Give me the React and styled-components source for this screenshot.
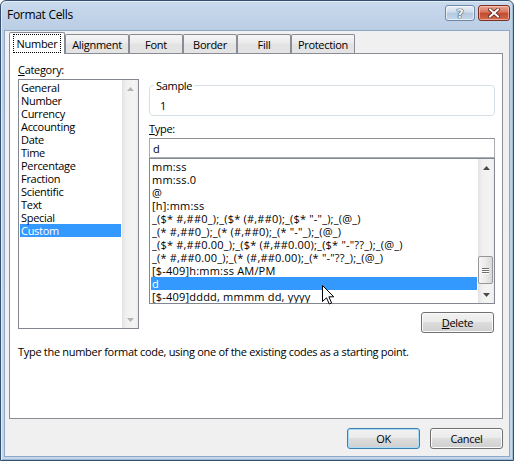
import React from 'react';
import styled, { createGlobalStyle } from 'styled-components';

const FONT = '"Open Sans", "Noto Sans", "Liberation Sans", sans-serif';

const GlobalStyle = createGlobalStyle`
  html, body { margin: 0; padding: 0; background: #fff; }
  body { font-family: ${FONT}; font-size: 11px; letter-spacing: -0.3px; color: #000; }
  * { box-sizing: border-box; }
`;

const categories = ['General', 'Number', 'Currency', 'Accounting', 'Date', 'Time',
  'Percentage', 'Fraction', 'Scientific', 'Text', 'Special', 'Custom'];

const formats = [
  'mm:ss',
  'mm:ss.0',
  '@',
  '[h]:mm:ss',
  '_($* #,##0_);_($* (#,##0);_($* "-"_);_(@_)',
  '_(* #,##0_);_(* (#,##0);_(* "-"_);_(@_)',
  '_($* #,##0.00_);_($* (#,##0.00);_($* "-"??_);_(@_)',
  '_(* #,##0.00_);_(* (#,##0.00);_(* "-"??_);_(@_)',
  '[$-409]h:mm:ss AM/PM',
  'd',
  '[$-409]dddd, mmmm dd, yyyy',
];

const tabs = [
  { label: 'Number', w: 56 },
  { label: 'Alignment', w: 64 },
  { label: 'Font', w: 54 },
  { label: 'Border', w: 54 },
  { label: 'Fill', w: 54 },
  { label: 'Protection', w: 64 },
];

const Window = styled.div`
  position: relative;
  width: 514px;
  height: 461px;
  display: flex;
  flex-direction: column;
  border: 1px solid #34506e;
  border-radius: 6px 6px 0 0;
  padding: 0 3px 3px;
  background: linear-gradient(#c9daed, #b9cde4 30px, #c3d6eb);
  box-shadow: inset 1px 1px 0 #e3edf7, inset -1px -1px 0 #9fbad6;
`;

const TitleBar = styled.div`
  height: 29px;
  display: flex;
  align-items: flex-start;
  justify-content: space-between;
  padding: 4px 0 0 3px;
`;

const Title = styled.div`
  font-size: 12px;
  line-height: 19px;
  color: #000;
`;

const CaptionButtons = styled.div`
  display: flex;
  gap: 3px;
`;

const CaptionButton = styled.div`
  width: ${p => (p.$close ? 32 : 30)}px;
  height: 16px;
  border-radius: 3px;
  display: flex;
  align-items: center;
  justify-content: center;
  border: 1px solid ${p => (p.$close ? '#7a2f22' : '#6d87a5')};
  background: ${p => (p.$close
    ? 'linear-gradient(#e9a593, #d9745c 45%, #c44a30 50%, #cf6a4c)'
    : 'linear-gradient(#e8eff7, #cfdcea 45%, #b5c8de 50%, #c5d6e8)')};
  box-shadow: inset 0 0 0 1px ${p => (p.$close ? 'rgba(255,210,200,0.6)' : 'rgba(255,255,255,0.6)')};
`;

const HelpGlyph = styled.span`
  font-family: "DejaVu Sans", sans-serif;
  font-weight: bold;
  font-size: 13px;
  line-height: 13px;
  letter-spacing: 0;
  color: #eef3f8;
  text-shadow: 0 0 1px #2c4661, 0 0 1px #2c4661, 0 0 1px #2c4661;
`;

const Client = styled.div`
  flex: 1;
  display: flex;
  flex-direction: column;
  background: #f0f0f0;
  border: 1px solid #8ea8c5;
  padding: 1px 6px 0 4px;
`;

const TabStrip = styled.div`
  position: relative;
  z-index: 1;
  height: 21px;
  display: flex;
  align-items: flex-end;
`;

const Tab = styled.div`
  width: ${p => p.$w}px;
  height: ${p => (p.$active ? 22 : 19)}px;
  margin-bottom: ${p => (p.$active ? -1 : 0)}px;
  border: 1px solid #898c95;
  border-bottom: none;
  border-radius: 2px 2px 0 0;
  background: ${p => (p.$active
    ? '#fff'
    : 'linear-gradient(#f5f5f5, #ebebeb 45%, #e2e2e2 50%, #e4e4e4)')};
  display: flex;
  align-items: center;
  justify-content: center;
  padding-bottom: ${p => (p.$active ? 1 : 0)}px;
  font-size: 11px;
  line-height: 15px;
`;

const FocusText = styled.span`
  outline: 1px dotted #000;
  outline-offset: 0;
  padding: 1px 3px;
`;

const Panel = styled.div`
  height: 366px;
  background: #fff;
  border: 1px solid #898c95;
  padding: 8px 7px 0 8px;
`;

const PanelGrid = styled.div`
  display: grid;
  grid-template-columns: 121px 346px;
  column-gap: 10px;
  align-items: start;
`;

const Column = styled.div`
  display: flex;
  flex-direction: column;
`;

const FieldLabel = styled.div`
  line-height: 15px;
  margin-top: ${p => p.$top || 0}px;
  margin-bottom: 2px;
`;

const ListBox = styled.div`
  position: relative;
  height: ${p => p.$h}px;
  border: 1px solid #828790;
  background: #fff;
  display: flex;
`;

const Items = styled.div`
  flex: 1;
  min-width: 0;
  overflow: hidden;
  padding: 1px;
`;

const Item = styled.div`
  height: 13px;
  line-height: 13px;
  padding-left: 1px;
  white-space: pre;
  letter-spacing: ${p => (p.$code ? '0.2px' : 'inherit')};
  background: ${p => (p.$selected ? '#3399ff' : 'transparent')};
  color: ${p => (p.$selected ? '#fff' : '#000')};
`;

const ScrollBar = styled.div`
  width: 16px;
  display: flex;
  flex-direction: column;
  background: linear-gradient(to right, #e2e2e2, #f0f0f0 25%, #f4f4f4 75%, #ededed);
`;

const ScrollArrow = styled.div`
  height: 17px;
  display: flex;
  align-items: center;
  justify-content: center;
  color: ${p => (p.$disabled ? '#b4b4b4' : '#4a4a4a')};
`;

const ScrollTrack = styled.div`
  flex: 1;
  display: flex;
  flex-direction: column;
  justify-content: flex-end;
  padding: 0 1px 2px 0;
`;

const ScrollThumb = styled.div`
  height: 28px;
  border: 1px solid #979797;
  border-radius: 2px;
  background: linear-gradient(to right, #f6f6f6, #eaeaea 50%, #d9d9d9);
  display: flex;
  flex-direction: column;
  align-items: center;
  justify-content: center;
  gap: 1px;
`;

const Grip = styled.div`
  width: 7px;
  height: 1px;
  background: #6e6e6e;
  box-shadow: 0 1px 0 #fff;
`;

const SampleGroup = styled.fieldset`
  margin: 16px 0 0;
  padding: 5px 8px 2px;
  border: 1px solid #d5dfe5;
  border-radius: 4px;
  min-width: 0;
`;

const SampleLegend = styled.legend`
  padding: 0 2px;
  margin-left: -4px;
  line-height: 15px;
`;

const SampleValue = styled.div`
  line-height: 15px;
  padding-left: 2px;
`;

const TypeInput = styled.input`
  height: 20px;
  width: 100%;
  border: 1px solid #abadb3;
  border-top-color: #8e9196;
  padding: 0 3px;
  font-family: ${FONT};
  font-size: 11px;
  color: #000;
  outline: none;
  background: #fff;
`;

const ButtonRow = styled.div`
  display: flex;
  justify-content: flex-end;
  padding-right: 1px;
  margin-top: 8px;
`;

const DialogButton = styled.button`
  width: 73px;
  height: 21px;
  padding: 0;
  font-family: ${FONT};
  font-size: 11px;
  letter-spacing: -0.3px;
  color: #000;
  border: 1px solid ${p => (p.$default ? '#3c7fb1' : '#707070')};
  border-radius: 3px;
  background: linear-gradient(#f2f2f2, #ebebeb 45%, #dddddd 50%, #cfcfcf);
  box-shadow: inset 0 0 0 1px ${p => (p.$default ? '#a9dcf6' : '#fbfbfb')};
`;

const Hint = styled.div`
  margin-top: 11px;
  line-height: 15px;
`;

const Footer = styled.div`
  display: flex;
  justify-content: flex-end;
  gap: 10px;
  padding-top: 9px;
`;

const Pointer = styled.svg`
  position: absolute;
  left: 172px;
  top: 126px;
  z-index: 2;
`;

function Arrow({ up }) {
  return (
    <svg width="7" height="4" viewBox="0 0 7 4">
      <path d={up ? 'M3.5 0 L7 4 L0 4 Z' : 'M0 0 L7 0 L3.5 4 Z'} fill="currentColor" />
    </svg>
  );
}

function CloseGlyph() {
  return (
    <svg width="12" height="10" viewBox="0 0 12 10">
      <path d="M2 1.5 L10 8.5 M10 1.5 L2 8.5" stroke="#5a2218" strokeWidth="3.6" strokeLinecap="square" />
      <path d="M2 1.5 L10 8.5 M10 1.5 L2 8.5" stroke="#fff" strokeWidth="2" strokeLinecap="square" />
    </svg>
  );
}

function Scroller({ disabled, thumb }) {
  return (
    <ScrollBar>
      <ScrollArrow $disabled={disabled}><Arrow up /></ScrollArrow>
      <ScrollTrack>
        {thumb && (
          <ScrollThumb>
            <Grip /><Grip /><Grip />
          </ScrollThumb>
        )}
      </ScrollTrack>
      <ScrollArrow $disabled={disabled}><Arrow /></ScrollArrow>
    </ScrollBar>
  );
}

export default function App() {
  return (
    <Window>
      <GlobalStyle />
      <TitleBar>
        <Title>Format Cells</Title>
        <CaptionButtons>
          <CaptionButton><HelpGlyph>?</HelpGlyph></CaptionButton>
          <CaptionButton $close><CloseGlyph /></CaptionButton>
        </CaptionButtons>
      </TitleBar>

      <Client>
        <TabStrip>
          {tabs.map((t, i) => (
            <Tab key={t.label} $w={t.w} $active={i === 0}>
              {i === 0 ? <FocusText>{t.label}</FocusText> : t.label}
            </Tab>
          ))}
        </TabStrip>

        <Panel>
          <PanelGrid>
            <Column>
              <FieldLabel><u>C</u>ategory:</FieldLabel>
              <ListBox $h={250}>
                <Items>
                  {categories.map(c => (
                    <Item key={c} $selected={c === 'Custom'}>{c}</Item>
                  ))}
                </Items>
                <Scroller disabled />
              </ListBox>
            </Column>

            <Column>
              <SampleGroup>
                <SampleLegend>Sample</SampleLegend>
                <SampleValue>1</SampleValue>
              </SampleGroup>
              <FieldLabel $top={5}><u>T</u>ype:</FieldLabel>
              <TypeInput value="d" readOnly />
              <ListBox $h={146}>
                <Items>
                  {formats.map(f => (
                    <Item key={f} $code $selected={f === 'd'}>{f}</Item>
                  ))}
                </Items>
                <Scroller thumb />
                <Pointer width="13" height="20" viewBox="0 0 13 20">
                  <path d="M0.5 0.5 L0.5 16.5 L4.5 12.8 L7.3 19 L9.6 18 L6.9 11.8 L11.8 11.8 Z"
                    fill="#fff" stroke="#000" strokeWidth="1" strokeLinejoin="miter" />
                </Pointer>
              </ListBox>
              <ButtonRow>
                <DialogButton><u>D</u>elete</DialogButton>
              </ButtonRow>
            </Column>
          </PanelGrid>
          <Hint>Type the number format code, using one of the existing codes as a starting point.</Hint>
        </Panel>

        <Footer>
          <DialogButton $default>OK</DialogButton>
          <DialogButton>Cancel</DialogButton>
        </Footer>
      </Client>
    </Window>
  );
}
